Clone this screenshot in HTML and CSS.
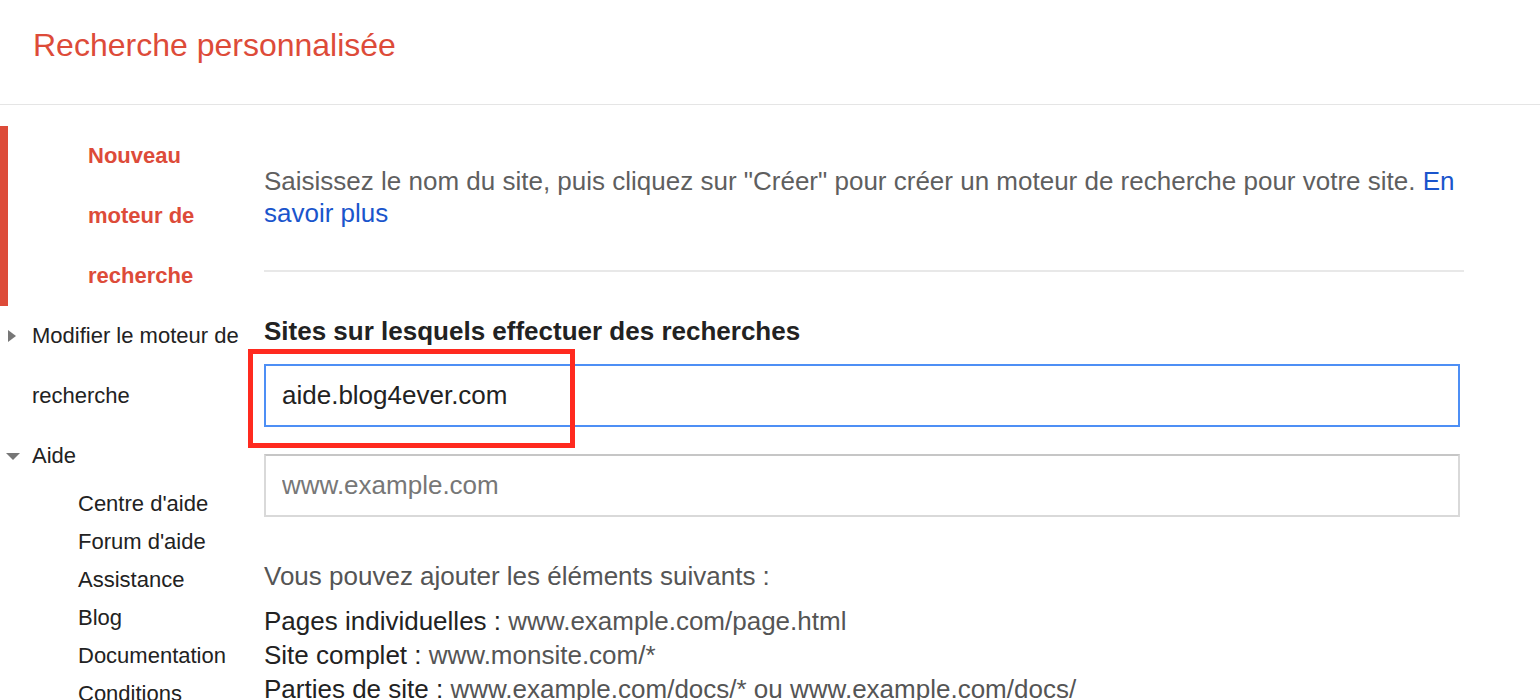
FILE: index.html
```html
<!DOCTYPE html>
<html lang="fr">
<head>
  <meta charset="UTF-8" />
  <meta name="viewport" content="width=device-width, initial-scale=1.0"/>
  <title>Recherche personnalisée</title>
  <link rel="stylesheet" href="styles.css">
</head>
<body>

  <header class="top-bar">
    <h1>Recherche personnalisée</h1>
  </header>

  <div class="layout">
    <nav class="side-nav">
      <a class="nav-item active" href="#">Nouveau moteur de recherche</a>
      <a class="nav-item toggle" href="#">
        <span class="arrow arrow-right"></span>
        <span class="nav-label">Modifier le moteur de recherche</span>
      </a>
      <a class="nav-item toggle" href="#">
        <span class="arrow arrow-down"></span>
        <span class="nav-label">Aide</span>
      </a>
      <ul class="sub-nav">
        <li><a href="#">Centre d'aide</a></li>
        <li><a href="#">Forum d'aide</a></li>
        <li><a href="#">Assistance</a></li>
        <li><a href="#">Blog</a></li>
        <li><a href="#">Documentation</a></li>
        <li><a href="#">Conditions</a></li>
      </ul>
    </nav>

    <main class="content">
      <p class="intro">Saisissez le nom du site, puis cliquez sur "Créer" pour créer un moteur de recherche pour votre site. <a href="#">En savoir plus</a></p>

      <hr class="divider">

      <h2>Sites sur lesquels effectuer des recherches</h2>

      <div class="site-field">
        <input type="text" class="site-input focused" value="aide.blog4ever.com">
        <div class="highlight-box"></div>
      </div>
      <div class="site-field">
        <input type="text" class="site-input" placeholder="www.example.com">
      </div>

      <p class="hint">Vous pouvez ajouter les éléments suivants :</p>
      <ul class="examples">
        <li>Pages individuelles : <span>www.example.com/page.html</span></li>
        <li>Site complet : <span>www.monsite.com/*</span></li>
        <li>Parties de site : <span>www.example.com/docs/* ou www.example.com/docs/</span></li>
      </ul>
    </main>
  </div>

</body>
</html>
```

FILE: styles.css
```css
* {
  margin: 0;
  padding: 0;
  box-sizing: border-box;
}

body {
  font-family: 'Liberation Sans', Arial, Helvetica, sans-serif;
  background: #fff;
  color: #222;
  overflow: hidden;
}

a {
  text-decoration: none;
}

.top-bar {
  height: 105px;
  border-bottom: 1px solid #e5e5e5;
  padding: 24px 0 0 33px;
}

.top-bar h1 {
  font-size: 32px;
  font-weight: normal;
  line-height: 42px;
  color: #dd4b39;
}

.layout {
  display: flex;
}

/* left menu */
.side-nav {
  width: 244px;
  flex-shrink: 0;
  margin-top: 21px;
  font-size: 22px;
}

.nav-item {
  display: flex;
  line-height: 60px;
  color: #222;
}

.nav-item.active {
  display: block;
  border-left: 8px solid #dd4b39;
  padding-left: 80px;
  color: #dd4b39;
  font-weight: bold;
}

.arrow {
  width: 32px;
  flex-shrink: 0;
  position: relative;
}

.arrow::before {
  content: '';
  position: absolute;
  width: 0;
  height: 0;
}

.arrow-right::before {
  left: 8px;
  top: 24px;
  border-top: 6px solid transparent;
  border-bottom: 6px solid transparent;
  border-left: 8px solid #777;
}

.arrow-down::before {
  left: 6px;
  top: 27px;
  border-left: 7px solid transparent;
  border-right: 7px solid transparent;
  border-top: 7px solid #777;
}

.sub-nav {
  list-style: none;
  padding-left: 78px;
  margin-top: -1px;
}

.sub-nav li {
  line-height: 38px;
}

.sub-nav a {
  color: #222;
}

/* main column */
.content {
  width: 1200px;
  padding-top: 60px;
  padding-left: 20px;
  box-sizing: content-box;
  font-size: 26px;
}

.intro {
  line-height: 32px;
  color: #5f5f5f;
}

.intro a {
  color: #1a55cc;
}

.divider {
  border: none;
  height: 2px;
  background: #e8e8e8;
  margin-top: 41px;
}

.content h2 {
  font-size: 26px;
  font-weight: bold;
  line-height: 32px;
  color: #222;
  margin-top: 43px;
}

.site-field {
  position: relative;
  width: 1196px;
  margin-top: 17px;
}

.site-field + .site-field {
  margin-top: 27px;
}

.site-input {
  width: 100%;
  height: 63px;
  border: 2px solid #d9d9d9;
  border-top-color: #c6c6c6;
  padding: 0 16px;
  font-family: 'Liberation Sans', Arial, sans-serif;
  font-size: 26px;
  color: #222;
  outline: none;
}

.site-input.focused {
  border-color: #4d8ff5;
}

.site-input::placeholder {
  color: #777;
}

.highlight-box {
  position: absolute;
  left: -16px;
  top: -15px;
  width: 327px;
  height: 99px;
  border: 5px solid #ff2a1f;
}

.hint {
  margin-top: 42px;
  line-height: 34px;
  color: #555;
}

.examples {
  list-style: none;
  margin-top: 11px;
}

.examples li {
  line-height: 34px;
  color: #222;
}

.examples span {
  color: #555;
}
```
